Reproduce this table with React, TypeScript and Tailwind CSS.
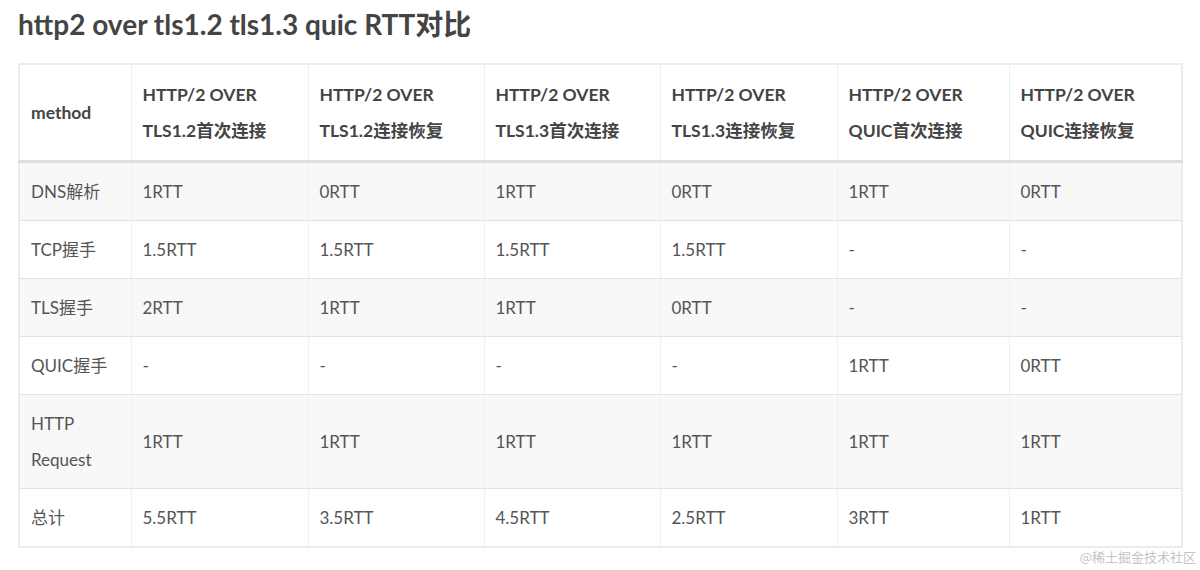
import React from 'react';

const headers = [
  ['method'],
  ['HTTP/2 OVER', 'TLS1.2首次连接'],
  ['HTTP/2 OVER', 'TLS1.2连接恢复'],
  ['HTTP/2 OVER', 'TLS1.3首次连接'],
  ['HTTP/2 OVER', 'TLS1.3连接恢复'],
  ['HTTP/2 OVER', 'QUIC首次连接'],
  ['HTTP/2 OVER', 'QUIC连接恢复'],
];

const rows: string[][] = [
  ['DNS解析', '1RTT', '0RTT', '1RTT', '0RTT', '1RTT', '0RTT'],
  ['TCP握手', '1.5RTT', '1.5RTT', '1.5RTT', '1.5RTT', '-', '-'],
  ['TLS握手', '2RTT', '1RTT', '1RTT', '0RTT', '-', '-'],
  ['QUIC握手', '-', '-', '-', '-', '1RTT', '0RTT'],
  ['HTTP Request', '1RTT', '1RTT', '1RTT', '1RTT', '1RTT', '1RTT'],
  ['总计', '5.5RTT', '3.5RTT', '4.5RTT', '2.5RTT', '3RTT', '1RTT'],
];

const widths = ['w-[112px]', 'w-[177px]', 'w-[176px]', 'w-[176px]', 'w-[177px]', 'w-[172px]', 'w-[173px]'];

const App: React.FC = () => {
  return (
    <div className="w-[1200px] h-[570px] bg-white overflow-hidden px-[18px] pt-[5px] font-['Lato','Noto_Sans_CJK_SC',sans-serif] text-[#555]">
      <h2 className="text-[28px] font-bold leading-[38px] text-[#444] mb-[20px]">http2 over tls1.2 tls1.3 quic RTT对比</h2>

      <table className="border-collapse table-fixed w-[1163px] text-[17px] border-2 border-[#ececec]">
        <colgroup>
          {widths.map((w, i) => (
            <col key={i} className={w} />
          ))}
        </colgroup>
        <thead>
          <tr className="bg-white border-b-[3px] border-[#dedede]">
            {headers.map((h, i) => (
              <th key={i} className="text-left align-middle font-bold text-[17.5px] px-[11px] py-[11.5px] leading-[36px] border-x border-[#efefef] text-[#444]">
                {h.map((line, j) => (
                  <div key={j}>{line}</div>
                ))}
              </th>
            ))}
          </tr>
        </thead>
        <tbody>
          {rows.map((r, i) => (
            <tr key={i} className={`${i % 2 === 0 ? 'bg-[#f8f8f8]' : 'bg-white'} border-t border-[#e2e2e2]`}>
              {r.map((c, j) => (
                <td key={j} className="align-middle px-[11px] py-[10.5px] leading-[36px] border-x border-[#efefef]">
                  {c === 'HTTP Request' ? (
                    <>
                      <div>HTTP</div>
                      <div>Request</div>
                    </>
                  ) : (
                    c
                  )}
                </td>
              ))}
            </tr>
          ))}
        </tbody>
      </table>

      <div className="flex justify-end -mr-[14px] mt-[1px]">
        <span className="text-[13px] leading-[16px] text-[#c4c4c4] font-['Noto_Sans_CJK_SC',sans-serif]">@稀土掘金技术社区</span>
      </div>
    </div>
  );
};

export default App;
